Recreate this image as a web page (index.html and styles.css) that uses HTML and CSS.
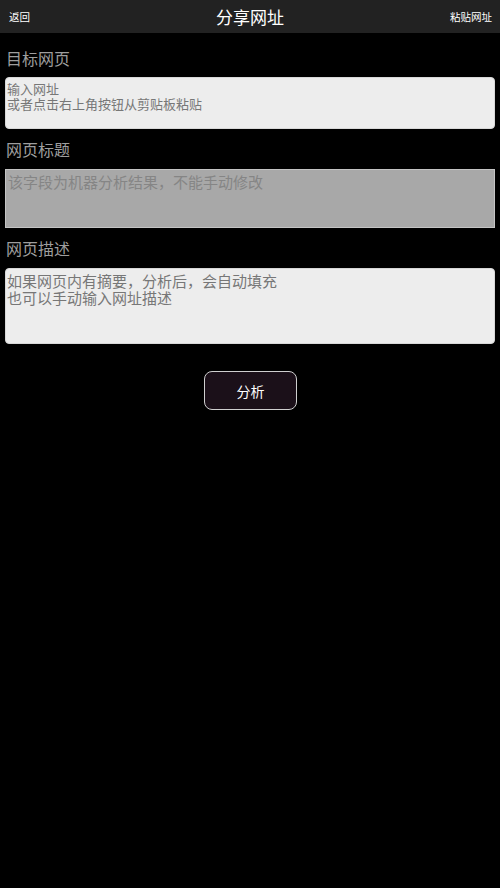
FILE: index.html
```html
<!DOCTYPE html>
<html lang="zh-CN">
<head>
<meta charset="utf-8">
<title>分享网址</title>
<link rel="stylesheet" href="styles.css">
</head>
<body>
<header class="topbar">
  <span class="nav-left">返回</span>
  <span class="nav-title">分享网址</span>
  <span class="nav-right">粘贴网址</span>
</header>
<main class="content">
  <div class="label first">目标网页</div>
  <textarea class="field field-url" placeholder="输入网址&#10;或者点击右上角按钮从剪贴板粘贴"></textarea>
  <div class="label">网页标题</div>
  <textarea class="field field-title" disabled placeholder="该字段为机器分析结果，不能手动修改"></textarea>
  <div class="label">网页描述</div>
  <textarea class="field field-desc" placeholder="如果网页内有摘要，分析后，会自动填充&#10;也可以手动输入网址描述"></textarea>
  <div class="actions">
    <button class="btn">分析</button>
  </div>
</main>
</body>
</html>
```
FILE: styles.css
```css
html, body {
  margin: 0;
  padding: 0;
  background: #000;
  height: 100%;
}
body {
  font-family: "Noto Sans CJK SC", "Noto Sans", sans-serif;
  color: #fff;
}
.topbar {
  height: 33px;
  background: #222;
  display: flex;
  align-items: center;
  justify-content: space-between;
  padding: 0 8px 0 9px;
  position: relative;
}
.nav-left, .nav-right {
  font-size: 10.5px;
  color: #fff;
  line-height: 14px;
}
.nav-title {
  position: absolute;
  left: 0;
  right: 0;
  text-align: center;
  font-size: 17px;
  line-height: 33px;
  pointer-events: none;
}
.content {
  padding: 0 5px;
  display: flex;
  flex-direction: column;
}
.label {
  font-size: 16px;
  line-height: 20px;
  color: #9e9e9e;
  margin: 10px 0 10px 1px;
}
.label.first {
  margin-top: 15px;
  margin-bottom: 9px;
}
.field {
  display: block;
  box-sizing: border-box;
  width: 100%;
  margin: 0;
  resize: none;
  font-family: "Noto Sans CJK SC", "Noto Sans", sans-serif;
  background: #ededed;
  border: 1px solid #d8d8d8;
  border-radius: 4px;
  outline: none;
  padding: 3px 1px;
  color: #333;
}
.field::placeholder {
  color: #777;
  opacity: 1;
}
.field-url {
  height: 52px;
  font-size: 13px;
  line-height: 15px;
}
.field-title {
  height: 59px;
  font-size: 15px;
  line-height: 17px;
  background: #a8a8a8;
  border: 1px solid #c4c4c4;
  border-radius: 0;
  padding: 3px 2px;
}
.field-title::placeholder {
  color: #858585;
}
.field-desc {
  height: 76px;
  font-size: 15px;
  line-height: 17px;
}
.actions {
  display: flex;
  justify-content: center;
  padding-top: 27px;
}
.btn {
  width: 93px;
  height: 39px;
  margin-left: 1px;
  background: #1b1019;
  border: 1.5px solid #cfcfcf;
  border-radius: 8px;
  color: #fff;
  font-family: "Noto Sans CJK SC", "Noto Sans", sans-serif;
  font-size: 14px;
  padding: 0;
}
```
